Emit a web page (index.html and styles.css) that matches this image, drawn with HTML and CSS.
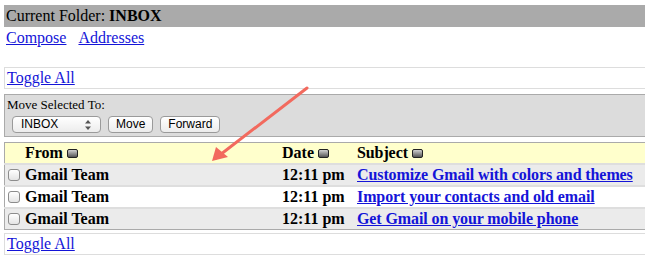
FILE: index.html
```html
<!DOCTYPE html>
<html lang="en">
  <head>
    <meta charset="UTF-8" />
    <title>INBOX</title>
    <link rel="stylesheet" href="styles.css">
  </head>
  <body>
    <div class="page">
      <div class="folder-bar">Current Folder: <b>INBOX</b></div>

      <div class="nav">
        <a href="#">Compose</a>
        <a href="#">Addresses</a>
      </div>

      <div class="toggle-box"><a href="#">Toggle All</a></div>

      <div class="move-box">
        <div class="move-label">Move Selected To:</div>
        <div class="move-controls">
          <span class="select">INBOX
            <svg class="updown" width="6" height="10" viewBox="0 0 6 10">
              <polygon points="3,0 6,3.5 0,3.5" fill="#555" />
              <polygon points="3,10 6,6.5 0,6.5" fill="#555" />
            </svg>
          </span>
          <span class="btn">Move</span>
          <span class="btn">Forward</span>
        </div>
      </div>

      <table class="messages">
        <tr class="head">
          <th class="col-from">From <span class="sort"></span></th>
          <th class="col-date">Date <span class="sort"></span></th>
          <th class="col-subject">Subject <span class="sort"></span></th>
        </tr>
        <tr class="odd">
          <td class="col-from"><span class="check"></span>Gmail Team</td>
          <td class="col-date">12:11 pm</td>
          <td class="col-subject"><a href="#">Customize Gmail with colors and themes</a></td>
        </tr>
        <tr>
          <td class="col-from"><span class="check"></span>Gmail Team</td>
          <td class="col-date">12:11 pm</td>
          <td class="col-subject"><a href="#">Import your contacts and old email</a></td>
        </tr>
        <tr class="odd">
          <td class="col-from"><span class="check"></span>Gmail Team</td>
          <td class="col-date">12:11 pm</td>
          <td class="col-subject"><a href="#">Get Gmail on your mobile phone</a></td>
        </tr>
      </table>

      <div class="toggle-box bottom"><a href="#">Toggle All</a></div>
    </div>

    <!-- annotation arrow -->
    <svg class="arrow" width="645" height="259" viewBox="0 0 645 259">
      <line x1="307" y1="88" x2="216" y2="158" stroke="#f26a5e" stroke-width="3" stroke-linecap="round" />
      <polygon points="212,161 216,147 228,157" fill="#f26a5e" />
    </svg>
  </body>
</html>
```

FILE: styles.css
```css
body {
  margin: 0;
  padding: 5px 0 0 4px;
  overflow: hidden;
  font-family: "Liberation Serif", "Times New Roman", serif;
  font-size: 16px;
  color: #000;
  background: #fff;
}

a {
  color: #1414d8;
}

.page {
  width: 660px;
}

.folder-bar {
  background-color: #aaaaaa;
  height: 22px;
  line-height: 22px;
  padding-left: 2px;
}

.nav {
  height: 40px;
  padding-left: 2px;
  line-height: 22px;
}

.nav a + a {
  margin-left: 8px;
}

.toggle-box {
  height: 20px;
  line-height: 20px;
  border: 1px solid #dddddd;
  padding-left: 2px;
}

.toggle-box.bottom {
  margin-top: 3px;
}

.move-box {
  margin-top: 5px;
  height: 41px;
  background-color: #dcdcdc;
  border: 1px solid #aaaaaa;
  padding-left: 2px;
}

.move-label {
  font-size: 13px;
  line-height: 15px;
  margin-top: 2px;
}

.move-controls {
  display: flex;
  gap: 7px;
  margin-top: 4px;
  padding-left: 5px;
  font-family: "Liberation Sans", Arial, sans-serif;
  font-size: 12px;
}

.select,
.btn {
  height: 15px;
  line-height: 15px;
  border: 1px solid #9a9a9a;
  border-radius: 4px;
  background: linear-gradient(#ffffff, #ececec);
}

.select {
  width: 70px;
  padding: 0 9px 0 8px;
  display: flex;
  justify-content: space-between;
  align-items: center;
}

.btn {
  padding: 0 7px;
}

.messages {
  margin-top: 5px;
  width: 100%;
  border-collapse: collapse;
  border: 1px solid #aaaaaa;
  font-weight: bold;
}

.messages th,
.messages td {
  padding: 0;
  text-align: left;
  white-space: nowrap;
  line-height: 20px;
}

.messages tr.head {
  background-color: #ffffcc;
  height: 20px;
}

.messages td {
  border-top: 2px solid #dedede;
}

.messages tr.odd {
  background-color: #ebebeb;
}

.col-from {
  width: 257px;
  padding-left: 20px !important;
  position: relative;
}

.col-date {
  width: 75px;
}

.col-subject {
  letter-spacing: -0.1px;
}

.sort {
  display: inline-block;
  width: 9px;
  height: 7px;
  border: 1px solid #222;
  border-radius: 2px;
  background: linear-gradient(#d0d0d0, #555555);
  vertical-align: 0;
}

.check {
  position: absolute;
  left: 3px;
  top: 4px;
  width: 10px;
  height: 10px;
  border: 1px solid #8c8c8c;
  border-radius: 3px;
  background: linear-gradient(#ffffff, #e4e4e4);
}

.messages a {
  color: #1414d8;
}

.arrow {
  position: absolute;
  left: 0;
  top: 0;
  pointer-events: none;
}
```
